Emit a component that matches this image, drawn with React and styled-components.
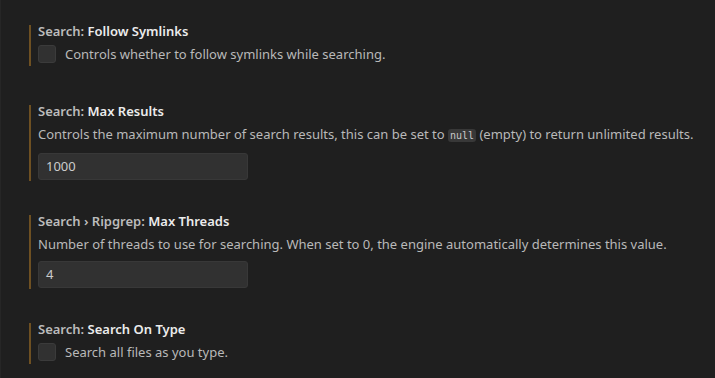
import React from 'react';
import styled, { createGlobalStyle } from 'styled-components';

const GlobalStyle = createGlobalStyle`
  html, body {
    margin: 0;
    padding: 0;
    background: #1f1f1f;
  }
  body {
    font-family: "Noto Sans", "Open Sans", sans-serif;
    font-size: 13px;
    color: #cccccc;
  }
`;

const Page = styled.div`
  width: 715px;
  height: 378px;
  box-sizing: border-box;
  padding: 25px 0 0 28px;
  border-left: 1px solid #262626;
  overflow: hidden;
  background: #1f1f1f;
`;

const Item = styled.div`
  display: flex;
  flex-direction: column;
  border-left: 2px solid #6e5022;
  padding: 0 0 ${p => p.$padBottom || 0}px 7px;
  margin-bottom: ${p => p.$gap}px;
`;

const Title = styled.div`
  height: 21px;
  margin-top: -3px;
  line-height: 18px;
  font-weight: 600;
  white-space: nowrap;
`;

const Category = styled.span`
  color: #bcbcbc;
`;

const Name = styled.span`
  color: #ececec;
`;

const Description = styled.div`
  margin-top: 1px;
  line-height: 20px;
  color: #b9b9b9;
  white-space: nowrap;
`;

const CheckRow = styled.label`
  display: flex;
  align-items: center;
  gap: 9px;
  height: 20px;
  margin-top: 1px;
  color: #b9b9b9;
  white-space: nowrap;
`;

const CheckBox = styled.span`
  width: 18px;
  height: 18px;
  box-sizing: border-box;
  border: 1px solid #3b3b3b;
  border-radius: 3px;
  background: #313131;
  flex: none;
`;

const Code = styled.code`
  font-family: "DejaVu Sans Mono", "Liberation Mono", monospace;
  font-size: 10px;
  color: #c8c8c8;
  background: #383838;
  border-radius: 3px;
  padding: 1px 2px;
`;

const Input = styled.div`
  margin-top: 7px;
  width: 210px;
  height: 27px;
  box-sizing: border-box;
  border: 1px solid #383838;
  border-radius: 3px;
  background: #313131;
  color: #cccccc;
  line-height: 25px;
  padding-left: 7px;
`;

function CheckboxSetting({ category, name, text, gap }) {
  return (
    <Item $gap={gap} $padBottom={2}>
      <Title>
        <Category>{category}: </Category>
        <Name>{name}</Name>
      </Title>
      <CheckRow>
        <CheckBox />
        {text}
      </CheckRow>
    </Item>
  );
}

function InputSetting({ category, name, children, value, gap }) {
  return (
    <Item $gap={gap} $padBottom={1}>
      <Title>
        <Category>{category}: </Category>
        <Name>{name}</Name>
      </Title>
      <Description>{children}</Description>
      <Input>{value}</Input>
    </Item>
  );
}

export default function App() {
  return (
    <>
      <GlobalStyle />
      <Page>
        <CheckboxSetting
          category="Search"
          name="Follow Symlinks"
          text="Controls whether to follow symlinks while searching."
          gap={39}
        />
        <InputSetting category="Search" name="Max Results" value="1000" gap={34}>
          Controls the maximum number of search results, this can be set to <Code>null</Code> (empty) to return unlimited results.
        </InputSetting>
        <InputSetting category="Search › Ripgrep" name="Max Threads" value="4" gap={34}>
          Number of threads to use for searching. When set to 0, the engine automatically determines this value.
        </InputSetting>
        <CheckboxSetting
          category="Search"
          name="Search On Type"
          text="Search all files as you type."
          gap={0}
        />
      </Page>
    </>
  );
}
